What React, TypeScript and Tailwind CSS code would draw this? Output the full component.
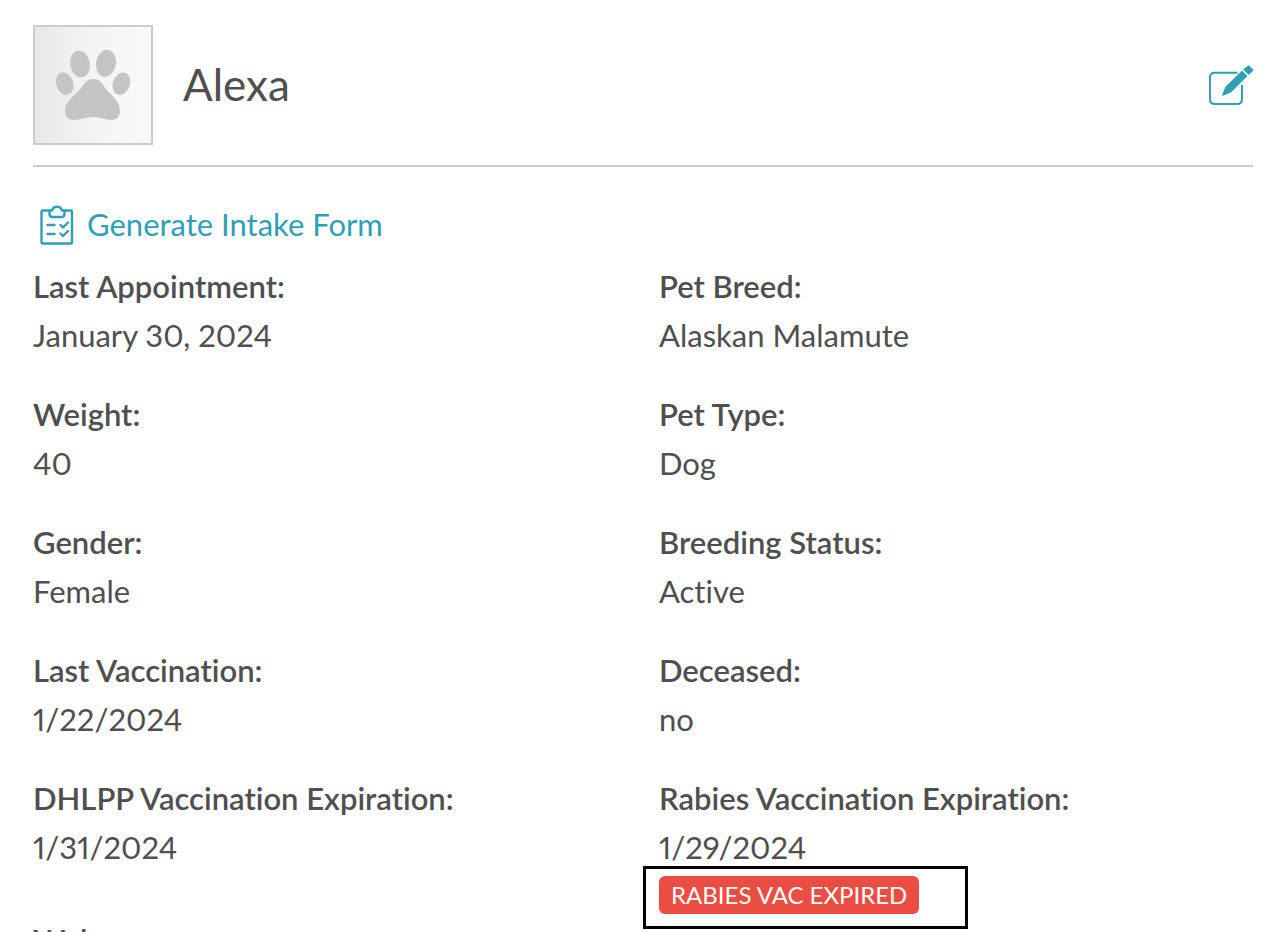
import React from "react";

type Detail = { label: string; value: string; alert?: string };

const details: Detail[] = [
  { label: "Last Appointment:", value: "January 30, 2024" },
  { label: "Pet Breed:", value: "Alaskan Malamute" },
  { label: "Weight:", value: "40" },
  { label: "Pet Type:", value: "Dog" },
  { label: "Gender:", value: "Female" },
  { label: "Breeding Status:", value: "Active" },
  { label: "Last Vaccination:", value: "1/22/2024" },
  { label: "Deceased:", value: "no" },
  { label: "DHLPP Vaccination Expiration:", value: "1/31/2024" },
  {
    label: "Rabies Vaccination Expiration:",
    value: "1/29/2024",
    alert: "RABIES VAC EXPIRED",
  },
  { label: "Web:", value: "" },
];

function PawIcon() {
  return (
    <svg viewBox="0 0 76 72" className="h-[72px] w-[76px]" fill="#c4c4c4" aria-hidden="true">
      <ellipse cx="25" cy="15" rx="9.9" ry="13.3" transform="rotate(-9 25 15)" />
      <ellipse cx="51" cy="14.3" rx="9.9" ry="13.5" transform="rotate(9 51 14.3)" />
      <ellipse cx="9.7" cy="34.7" rx="8.500" ry="11.4" transform="rotate(-18 9.7 34.7)" />
      <ellipse cx="66.3" cy="34.7" rx="8.500" ry="11.4" transform="rotate(18 66.3 34.7)" />
      <path d="M38.500 30C33 30 30 33.500 27 38C22 45.500 10 51 10 62C10 67.500 13.500 71 19 71C25.500 71 30 68 38 68C46 68 50.500 71 56 71C61.500 71 65 67.500 65 62C65 51 54.500 45.500 49.500 38C46.500 33.500 44 30 38.500 30Z" />
    </svg>
  );
}

function EditIcon() {
  return (
    <svg viewBox="0 0 46 42" className="h-[42px] w-[46px]" aria-hidden="true">
      <path
        d="M30.500 8.800H7.500Q3 8.800 3 13.500V35Q3 40 8 40H30Q35 40 35 35V21"
        fill="none"
        stroke="#2f9fb5"
        strokeWidth="2"
      />
      <path d="M35 6.500L40.500 12L24.500 28Q20 30.500 14.800 32Q16.500 26.500 18.700 22.500Z" fill="#2f9fb5" />
      <path d="M41 1.800Q41.700 1.200 42.400 1.800L46 5.400Q46.600 6.100 46 6.800L41.700 11.100L36.100 5.600Z" fill="#2f9fb5" />
      <path d="M34.500 5L42 12.500" stroke="#ffffff" strokeWidth="1" />
    </svg>
  );
}

function IntakeIcon() {
  return (
    <svg
      viewBox="0 0 34 40"
      className="h-10 w-[34px]"
      fill="none"
      stroke="#2f9fb5"
      strokeWidth="2.4"
      strokeLinecap="round"
      strokeLinejoin="round"
      aria-hidden="true"
    >
      <path d="M10 5.500H3Q1.500 5.500 1.500 7V37Q1.500 38.500 3 38.500H31Q32 38.500 32 37V7Q32 5.500 31 5.500H24" />
      <path d="M10.500 5.500H12Q13 1.700 17 1.700Q21 1.700 22 5.500H23.500Q24.500 5.500 24.500 6.500V9Q24.500 12 21.500 12H12.500Q9.500 12 9.500 9V6.500Q9.500 5.500 10.500 5.500Z" />
      <path d="M7.500 20H14.500M7.500 29H14.500" />
      <path d="M20.500 20L23 22.500L28 17.500M20.500 28.500L23 31L28 26" />
    </svg>
  );
}

export default function App() {
  return (
    <main className="min-h-screen bg-white pl-[33px] pr-[21px] pt-[25px] font-['Lato',sans-serif] text-[31px] leading-[49px] text-[#4f4f4f] proportional-nums [font-variant-ligatures:none]">
      <header className="flex items-center border-b-2 border-[#cccccc] pb-5">
        <div className="flex size-[120px] items-center justify-center border-2 border-[#cccccc] bg-linear-to-r from-[#e8e8e8] via-[#f5f4f5] to-[#faf9f7]">
          <PawIcon />
        </div>
        <h1 className="ml-[30px] pb-[2px] text-[44px] leading-[60px]">Alexa</h1>
        <button type="button" aria-label="Edit pet" className="-mr-3 ml-auto p-3">
          <EditIcon />
        </button>
      </header>

      <a href="#intake-form" className="mt-[33px] flex w-fit items-center gap-[13px] pl-[7px] text-[#2f9fb5]">
        <IntakeIcon />
        Generate Intake Form
      </a>

      <dl className="mt-[13px] grid grid-cols-2 gap-x-8 gap-y-[30px]">
        {details.map(({ label, value, alert }) => (
          <div key={label} className="min-h-[98px]">
            <dt className="font-semibold">{label}</dt>
            <dd>{value}</dd>
            {alert && (
              <dd className="-mb-[43px] -ml-4 -mt-[6px] flex w-[325px] max-w-full border-[3px] border-black px-[13px] pb-3 pt-[7px]">
                <span className="rounded-md bg-[#eb4d42] px-3 text-2xl leading-[38px] text-white">
                  {alert}
                </span>
              </dd>
            )}
          </div>
        ))}
      </dl>
    </main>
  );
}
